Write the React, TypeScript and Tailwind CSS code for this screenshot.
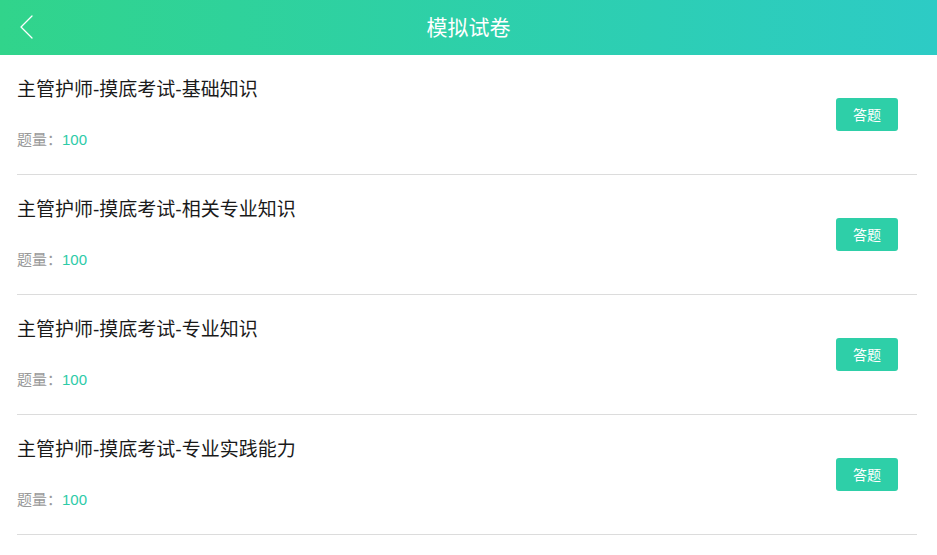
import React from "react";

const items = [
  "主管护师-摸底考试-基础知识",
  "主管护师-摸底考试-相关专业知识",
  "主管护师-摸底考试-专业知识",
  "主管护师-摸底考试-专业实践能力",
];

export default function App() {
  return (
    <div
      className="w-[937px] h-[555px] bg-white overflow-hidden"
      style={{ fontFamily: '"Liberation Sans", "Noto Sans CJK SC", sans-serif' }}
    >
      <header className="relative h-[55px] flex items-center justify-center bg-gradient-to-r from-[#31d48b] to-[#2dcbc5]">
        <svg
          className="absolute left-[19px] top-[15px]"
          width="15"
          height="24"
          viewBox="0 0 15 24"
          fill="none"
        >
          <path d="M13 1 L2 12 L13 23" stroke="white" strokeWidth="1.3" strokeLinecap="round" strokeLinejoin="round" />
        </svg>
        <h1 className="text-[21px] text-white font-normal leading-none">模拟试卷</h1>
      </header>
      <ul className="ml-[17px] mr-[20px]">
        {items.map((t) => (
          <li key={t} className="h-[120px] border-b border-[#dcdcdc] flex items-center justify-between">
            <div className="flex flex-col h-full pt-[23px]">
              <div className="text-[19px] leading-[24px] text-[#1a1a1a]">{t}</div>
              <div className="mt-[27px] text-[15px] leading-[22px] text-[#9a9a9a]">
                题量：<span className="text-[#2ecba8]">100</span>
              </div>
            </div>
            <button className="mr-[19px] w-[62px] h-[33px] rounded-[3px] bg-[#2ecfa8] text-white text-[14px] leading-none flex items-center justify-center">
              答题
            </button>
          </li>
        ))}
      </ul>
    </div>
  );
}
